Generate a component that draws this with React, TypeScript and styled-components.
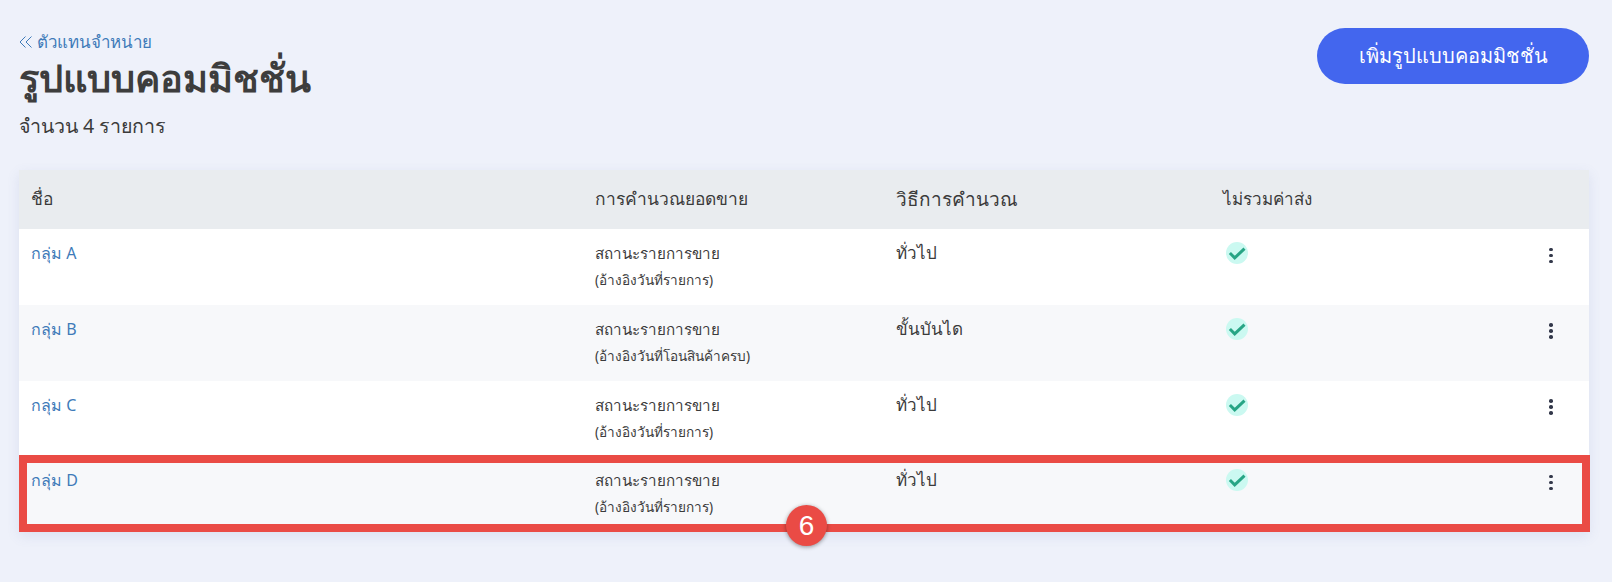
import styled, { createGlobalStyle } from "styled-components";

const GlobalStyle = createGlobalStyle`
  html, body {
    margin: 0;
    padding: 0;
    background: #eef1fa;
    font-family: "Noto Sans", "Open Sans", "Liberation Sans", sans-serif;
    color: #3b3b3b;
  }
`;

const rows = [
  { name: "กลุ่ม A", sub: "(อ้างอิงวันที่รายการ)", method: "ทั่วไป" },
  { name: "กลุ่ม B", sub: "(อ้างอิงวันที่โอนสินค้าครบ)", method: "ขั้นบันได" },
  { name: "กลุ่ม C", sub: "(อ้างอิงวันที่รายการ)", method: "ทั่วไป" },
  { name: "กลุ่ม D", sub: "(อ้างอิงวันที่รายการ)", method: "ทั่วไป", marked: true },
];

export default function App() {
  return (
    <Page>
      <GlobalStyle />
      <Header>
        <div>
          <BackLink href="#">
            <svg width="14" height="14" viewBox="0 0 14 14" fill="none" stroke="currentColor" strokeWidth="1">
              <path d="M6.5 1.5 1 7l5.5 5.5M12.5 1.5 7 7l5.5 5.5" />
            </svg>
            ตัวแทนจำหน่าย
          </BackLink>
          <Title>รูปแบบคอมมิชชั่น</Title>
          <Count>จำนวน 4 รายการ</Count>
        </div>
        <AddButton>เพิ่มรูปแบบคอมมิชชั่น</AddButton>
      </Header>

      <Table>
        <HeadRow>
          <HeadCell>ชื่อ</HeadCell>
          <HeadCell>การคำนวณยอดขาย</HeadCell>
          <HeadCell $size={19}>วิธีการคำนวณ</HeadCell>
          <HeadCell $size={17}>ไม่รวมค่าส่ง</HeadCell>
        </HeadRow>
        {rows.map((row, i) => (
          <Row key={row.name} $alt={i % 2 === 1}>
            <NameLink href="#">{row.name}</NameLink>
            <div>
              <Status>สถานะรายการขาย</Status>
              <SubText>{row.sub}</SubText>
            </div>
            <Method>{row.method}</Method>
            <CheckIcon viewBox="0 0 22 22">
              <circle cx="11" cy="11" r="11" fill="#cbf9f1" />
              <path d="M3.9 11 8.7 15.9 18.5 6.7" fill="none" stroke="#27a585" strokeWidth="3" />
            </CheckIcon>
            <KebabCell>
              <Dot />
              <Dot />
              <Dot />
            </KebabCell>
            {row.marked && (
              <Highlight>
                <Badge>6</Badge>
              </Highlight>
            )}
          </Row>
        ))}
      </Table>
    </Page>
  );
}

const Page = styled.div`
  padding: 28px 23px 50px 19px;
`;

const Header = styled.header`
  display: flex;
  justify-content: space-between;
  align-items: flex-start;
  margin-bottom: 30px;
`;

const BackLink = styled.a`
  display: flex;
  align-items: center;
  gap: 4px;
  height: 28px;
  font-size: 16.9px;
  color: #3f7bb9;
  text-decoration: none;
`;

const Title = styled.h1`
  margin: 0;
  font-size: 38px;
  line-height: 42px;
  font-weight: 600;
  color: #3d3d3d;
`;

const Count = styled.div`
  margin-top: 14px;
  font-size: 19.6px;
  line-height: 28px;
`;

const AddButton = styled.button`
  width: 272px;
  height: 56px;
  border: 0;
  border-radius: 28px;
  background: #4366ee;
  color: #fff;
  font: 500 20px "Noto Sans", sans-serif;
`;

const Table = styled.div`
  background: #fff;
  box-shadow: 0 4px 12px rgba(90, 110, 170, 0.12);
`;

const columns = "564px 301px 327px 1fr 76px";

const HeadRow = styled.div`
  display: grid;
  grid-template-columns: ${columns};
  align-items: center;
  height: 59px;
  box-sizing: border-box;
  padding: 0 0 2px 12px;
  background: #e9ecef;
`;

const HeadCell = styled.span<{ $size?: number }>`
  font-size: ${(p) => p.$size ?? 17.4}px;
`;

const Row = styled.div<{ $alt: boolean }>`
  position: relative;
  display: grid;
  grid-template-columns: ${columns};
  height: 75.75px;
  box-sizing: border-box;
  padding: 10px 0 0 12px;
  background: ${(p) => (p.$alt ? "#f7f8fa" : "#fff")};
`;

const NameLink = styled.a`
  font-size: 16px;
  line-height: 28px;
  color: #3f7bb9;
  text-decoration: none;
`;

const Status = styled.div`
  font-size: 15.2px;
  line-height: 28px;
`;

const SubText = styled.div`
  font-size: 13.6px;
  line-height: 26px;
`;

const Method = styled.div`
  font-size: 17px;
  line-height: 28px;
`;

const CheckIcon = styled.svg`
  width: 22px;
  height: 22px;
  margin: 3px 0 0 3px;
`;

const KebabCell = styled.div`
  display: flex;
  flex-direction: column;
  align-items: center;
  gap: 2.5px;
  padding-top: 8.5px;
`;

const Dot = styled.i`
  width: 3.5px;
  height: 3.5px;
  border-radius: 50%;
  background: #33384a;
`;

const Highlight = styled.div`
  position: absolute;
  inset: -1px -1px 0 0;
  border: 8px solid #ea4b45;
  pointer-events: none;
`;

const Badge = styled.div`
  position: absolute;
  left: 759px;
  bottom: -22px;
  width: 41px;
  height: 41px;
  border-radius: 50%;
  background: #ea4b45;
  color: #fff;
  font: 400 28px/41px "Liberation Sans", sans-serif;
  text-align: center;
  box-shadow: 0 1px 4px rgba(0, 0, 0, 0.4);
`;
